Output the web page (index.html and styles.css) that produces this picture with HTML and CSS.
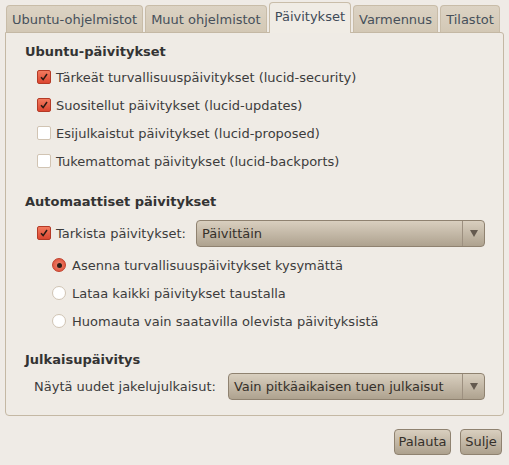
FILE: index.html
```html
<!DOCTYPE html>
<html lang="fi">
<head>
<meta charset="utf-8">
<link rel="stylesheet" href="styles.css">
</head>
<body>
<div class="window">
  <div class="tabs">
    <div class="tab">Ubuntu-ohjelmistot</div>
    <div class="tab">Muut ohjelmistot</div>
    <div class="tab active">Päivitykset</div>
    <div class="tab">Varmennus</div>
    <div class="tab">Tilastot</div>
  </div>
  <div class="panel">
    <div class="heading">Ubuntu-päivitykset</div>
    <div class="group g1">
      <div class="row"><span class="check on"><svg viewBox="0 0 14 14"><path d="M3.5 7.2 L6 10 L10.5 3.5" fill="none" stroke="#2a1a14" stroke-width="1.8"/></svg></span>Tärkeät turvallisuuspäivitykset (lucid-security)</div>
      <div class="row"><span class="check on"><svg viewBox="0 0 14 14"><path d="M3.5 7.2 L6 10 L10.5 3.5" fill="none" stroke="#2a1a14" stroke-width="1.8"/></svg></span>Suositellut päivitykset (lucid-updates)</div>
      <div class="row"><span class="check"></span>Esijulkaistut päivitykset (lucid-proposed)</div>
      <div class="row"><span class="check"></span>Tukemattomat päivitykset (lucid-backports)</div>
    </div>
    <div class="heading h2">Automaattiset päivitykset</div>
    <div class="group g2">
      <div class="row"><span class="check on"><svg viewBox="0 0 14 14"><path d="M3.5 7.2 L6 10 L10.5 3.5" fill="none" stroke="#2a1a14" stroke-width="1.8"/></svg></span><span class="label">Tarkista päivitykset:</span>
        <div class="combo"><span class="ctext">Päivittäin</span><span class="carrow"></span></div>
      </div>
      <div class="radios">
        <div class="row"><span class="radio on"></span>Asenna turvallisuuspäivitykset kysymättä</div>
        <div class="row"><span class="radio"></span>Lataa kaikki päivitykset taustalla</div>
        <div class="row"><span class="radio"></span>Huomauta vain saatavilla olevista päivityksistä</div>
      </div>
    </div>
    <div class="heading h3">Julkaisupäivitys</div>
    <div class="row rel"><span class="label">Näytä uudet jakelujulkaisut:</span>
      <div class="combo"><span class="ctext">Vain pitkäaikaisen tuen julkaisut</span><span class="carrow"></span></div>
    </div>
  </div>
  <div class="buttons">
    <div class="btn b1">Palauta</div>
    <div class="btn b2">Sulje</div>
  </div>
</div>
</body>
</html>
```
FILE: styles.css
```css
html, body {
  margin: 0;
  padding: 0;
  background: #efebe6;
}
body {
  font-family: "DejaVu Sans", sans-serif;
  font-size: 13px;
  color: #3c3c3c;
  width: 509px;
  height: 465px;
  overflow: hidden;
}
.window {
  padding: 2px 5px 0 5px;
}
.tabs {
  display: flex;
  align-items: flex-end;
  height: 30px;
  padding-left: 1px;
  position: relative;
  z-index: 1;
}
.tab {
  height: 27px;
  line-height: 27px;
  padding: 0 5px;
  margin-right: 2px;
  background: linear-gradient(#dcd3c4, #d3c8b5);
  border: 1px solid #c8bca8;
  border-bottom: none;
  border-radius: 4px 4px 0 0;
  box-sizing: border-box;
  color: #46505a;
  white-space: nowrap;
}
.tab.active {
  height: 31px;
  line-height: 27px;
  margin-bottom: -1px;
  background: #f0ece5;
  border-color: #c9bda9;
  color: #3f4a57;
}
.panel {
  border: 1px solid #c4b8a4;
  border-radius: 0 3px 4px 4px;
  background: #efebe5;
  height: 384px;
  box-sizing: border-box;
  padding: 10px 18px 0 19px;
}
.heading {
  font-weight: bold;
  line-height: 18px;
  height: 18px;
  color: #333;
}
.group.g1 {
  margin-top: 2px;
  padding-left: 12px;
}
.row {
  display: flex;
  align-items: center;
  height: 28px;
  white-space: nowrap;
}
.check {
  width: 14px;
  height: 14px;
  box-sizing: border-box;
  border: 1px solid #d1c4b3;
  border-radius: 2px;
  background: #fff;
  margin-right: 5px;
  display: inline-block;
  flex: none;
}
.check.on {
  background: linear-gradient(#f27a5e, #dc4630);
  border-color: #b43a26;
}
.check svg {
  display: block;
  width: 12px;
  height: 12px;
}
.h2 {
  margin-top: 18px;
}
.group.g2 {
  margin-top: 8px;
  padding-left: 12px;
}
.label {
  margin-right: 10px;
}
.combo {
  flex: 1;
  display: flex;
  align-items: center;
  height: 27px;
  box-sizing: border-box;
  border: 1px solid #8f8270;
  border-radius: 4px;
  background: linear-gradient(#d9cfbf, #aea28f);
  color: #35302a;
}
.ctext {
  flex: 1;
  padding-left: 5px;
}
.carrow {
  width: 22px;
  height: 100%;
  border-left: 1px solid #9d9080;
  box-sizing: border-box;
  display: flex;
  align-items: center;
  justify-content: center;
}
.carrow::after {
  content: "";
  width: 0;
  height: 0;
  border-left: 4px solid transparent;
  border-right: 4px solid transparent;
  border-top: 7px solid #645a4f;
}
.radios {
  margin-top: 4px;
  padding-left: 15px;
}
.radio {
  width: 14px;
  height: 14px;
  box-sizing: border-box;
  border-radius: 50%;
  border: 1px solid #d0c4b4;
  background: #fff;
  margin-right: 6px;
  flex: none;
  display: flex;
  align-items: center;
  justify-content: center;
}
.radio.on {
  background: radial-gradient(circle, #f08a74, #dc4630);
  border-color: #c0412c;
}
.radio.on::after {
  content: "";
  width: 5px;
  height: 5px;
  border-radius: 50%;
  background: #2b1e18;
}
.h3 {
  margin-top: 16px;
}
.row.rel {
  margin-top: 3px;
  padding-left: 9px;
}
.row.rel .label {
  margin-right: 12px;
}
.buttons {
  display: flex;
  justify-content: flex-end;
  gap: 9px;
  padding-top: 13px;
  padding-right: 2px;
}
.btn {
  height: 26px;
  line-height: 24px;
  box-sizing: border-box;
  border: 1px solid #8f8270;
  border-radius: 4px;
  background: linear-gradient(#d9cfbf, #ada18e);
  color: #35302a;
  text-align: center;
}
.b1 {
  width: 57px;
}
.b2 {
  width: 42px;
}
```
